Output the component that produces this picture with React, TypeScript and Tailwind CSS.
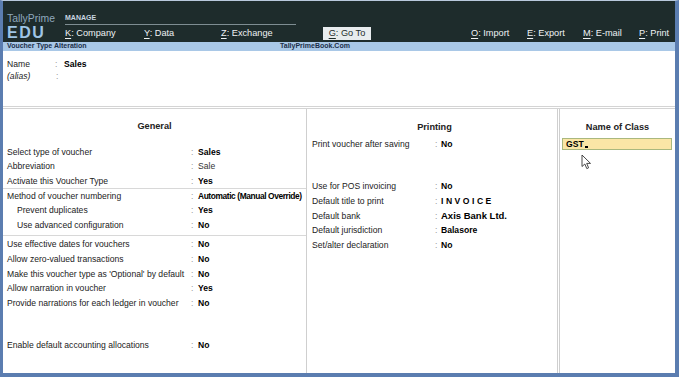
import type { ReactNode } from "react"

type Row = {
  label: string
  value: ReactNode
  bold?: boolean
  indent?: boolean
}

const font = "font-['Liberation_Sans',Arial,sans-serif]"

function Key({ k, label }: { k: string; label: string }) {
  return (
    <span>
      <span className="underline underline-offset-2">{k}</span>:{" "}{label}
    </span>
  )
}

function GeneralRow({ row }: { row: Row }) {
  return (
    <div className="flex h-[14.6px] items-center whitespace-nowrap">
      <span className={`w-[188px] shrink-0 text-[#222] ${row.indent ? "pl-[14px]" : "pl-[4px]"}`}>{row.label}</span>
      <span className="w-[7px] shrink-0 text-[#999]">:</span>
      <span className={row.bold === false ? "text-[#333]" : "font-bold text-black"}>{row.value}</span>
    </div>
  )
}

function PrintRow({ row }: { row: Row }) {
  return (
    <div className="flex h-[14.6px] items-center whitespace-nowrap">
      <span className="w-[123px] shrink-0 text-[#222]">{row.label}</span>
      <span className="w-[6px] shrink-0 text-[#999]">:</span>
      <span className={row.bold === false ? "text-[#333]" : "font-bold text-black"}>{row.value}</span>
    </div>
  )
}

export default function App() {
  const groupA: Row[] = [
    { label: "Select type of voucher", value: "Sales" },
    { label: "Abbreviation", value: "Sale", bold: false },
    { label: "Activate this Voucher Type", value: "Yes" },
  ]
  const groupB: Row[] = [
    { label: "Method of voucher numbering", value: <span className="tracking-[-0.4px] text-[8.4px]">Automatic (Manual Override)</span> },
    { label: "Prevent duplicates", value: "Yes", indent: true },
    { label: "Use advanced configuration", value: "No", indent: true },
  ]
  const groupC: Row[] = [
    { label: "Use effective dates for vouchers", value: "No" },
    { label: "Allow zero-valued transactions", value: "No" },
    { label: "Make this voucher type as 'Optional' by default", value: "No" },
    { label: "Allow narration in voucher", value: "Yes" },
    { label: "Provide narrations for each ledger in voucher", value: "No" },
  ]
  const printing: Row[] = [
    { label: "Use for POS invoicing", value: "No" },
    { label: "Default title to print", value: <span className="tracking-[2.5px]">INVOICE</span> },
    { label: "Default bank", value: <span className="text-[9.5px]">Axis Bank Ltd.</span> },
    { label: "Default jurisdiction", value: "Balasore" },
    { label: "Set/alter declaration", value: "No" },
  ]

  return (
    <div className={`${font} relative flex h-[377px] w-[679px] flex-col overflow-hidden border-t-[1px] border-r-[4px] border-b-[4px] border-l-[3px] border-[#5b7db0] border-t-[#b9c9dd] bg-white text-[8.6px]`}>
      {/* top bar */}
      <div className="flex h-[41px] shrink-0 bg-[#1e2c2c]">
        <div className="flex w-[62px] shrink-0 flex-col pl-[4px] pt-[12px]">
          <span className="text-[10.4px] leading-[12px] text-[#8fa8bd]">TallyPrime</span>
          <span className="text-[16px] font-bold leading-[15px] tracking-[1.5px] text-[#9fc5e6]">EDU</span>
        </div>
        <div className="flex flex-1 flex-col pt-[13px]">
          <div className="w-[231px] border-b border-[#7e8d92] pb-[2px] text-[7px] font-bold leading-[8px] text-[#c9d6e0]">MANAGE</div>
          <div className="flex items-center pt-[1px] text-[9.2px] leading-[14px] text-[#eef2f4]">
            <span className="w-[79px]"><Key k="K" label="Company" /></span>
            <span className="w-[77px]"><Key k="Y" label="Data" /></span>
            <span className="w-[102px]"><Key k="Z" label="Exchange" /></span>
            <span className="flex h-[13px] w-[48px] items-center justify-center bg-[#e8ecee] text-[#1e2c2c]"><Key k="G" label="Go To" /></span>
            <span className="ml-[100px] w-[56px]"><Key k="O" label="Import" /></span>
            <span className="w-[56px]"><Key k="E" label="Export" /></span>
            <span className="w-[56px]"><Key k="M" label="E-mail" /></span>
            <span><Key k="P" label="Print" /></span>
          </div>
        </div>
      </div>

      {/* title band */}
      <div className="relative flex h-[9px] shrink-0 items-center bg-[#a9c8e7] px-[4px] text-[7px] font-bold text-[#1b2f4a]">
        <span>Voucher Type Alteration</span>
        <span className="absolute left-[277px]">TallyPrimeBook.Com</span>
      </div>

      {/* name */}
      <div className="h-[58px] shrink-0 border-b-[3px] border-double border-[#d4d4d4] pl-[4px] pt-[7px]">
        <div className="flex h-[12px] items-center">
          <span className="w-[48px] text-[#222]">Name</span>
          <span className="w-[9px] text-[#999]">:</span>
          <span className="font-bold text-black">Sales</span>
        </div>
        <div className="flex h-[12px] items-center">
          <span className="w-[49px] italic text-[#222]">(alias)</span>
          <span className="text-[#999]">:</span>
        </div>
      </div>

      {/* columns */}
      <div className="flex flex-1">
        <div className="w-[304px] shrink-0 border-r border-[#cfcfcf]">
          <div className="flex h-[36px] items-end justify-center pb-[11px] text-[9.2px] font-bold text-[#222]">General</div>
          <div>
            {groupA.map((r) => <GeneralRow key={r.label} row={r} />)}
          </div>
          <div className="-mt-px border-t border-[#d8d8d8]">
            {groupB.map((r) => <GeneralRow key={r.label} row={r} />)}
          </div>
          <div className="mt-[2px] border-t border-[#d8d8d8] pt-[2px]">
            {groupC.map((r) => <GeneralRow key={r.label} row={r} />)}
          </div>
          <div className="mt-[28px]">
            <GeneralRow row={{ label: "Enable default accounting allocations", value: "No" }} />
          </div>
        </div>

        <div className="w-[253px] shrink-0 border-r-[3px] border-double border-[#cfcfcf] pl-[5px]">
          <div className="flex h-[26px] items-end justify-center text-[9.2px] font-bold text-[#222]">Printing</div>
          <div className="pt-[2px]">
            <PrintRow row={{ label: "Print voucher after saving", value: "No" }} />
          </div>
          <div className="mt-[28px]">
            {printing.map((r) => <PrintRow key={r.label} row={r} />)}
          </div>
        </div>

        <div className="flex-1 px-[2px]">
          <div className="flex h-[26px] items-end justify-center text-[9.2px] font-bold text-[#222]">Name of Class</div>
          <div className="mt-[3px] flex h-[12px] w-[110px] items-center border border-[#aab87e] bg-[#fbe6a6] pl-[3px] font-bold text-black">
            GST<span className="ml-[1px] mt-[5px] h-[2px] w-[3px] bg-black" />
          </div>
        </div>
      </div>

      {/* mouse pointer */}
      <svg className="absolute left-[578px] top-[153px]" width="12" height="16" viewBox="0 0 12 16">
        <path d="M1 1 L1 12.5 L3.8 10 L5.8 14.6 L7.6 13.8 L5.7 9.4 L9.5 9.4 Z" fill="#fff" stroke="#333" strokeWidth="0.9" strokeLinejoin="round" />
      </svg>
    </div>
  )
}
